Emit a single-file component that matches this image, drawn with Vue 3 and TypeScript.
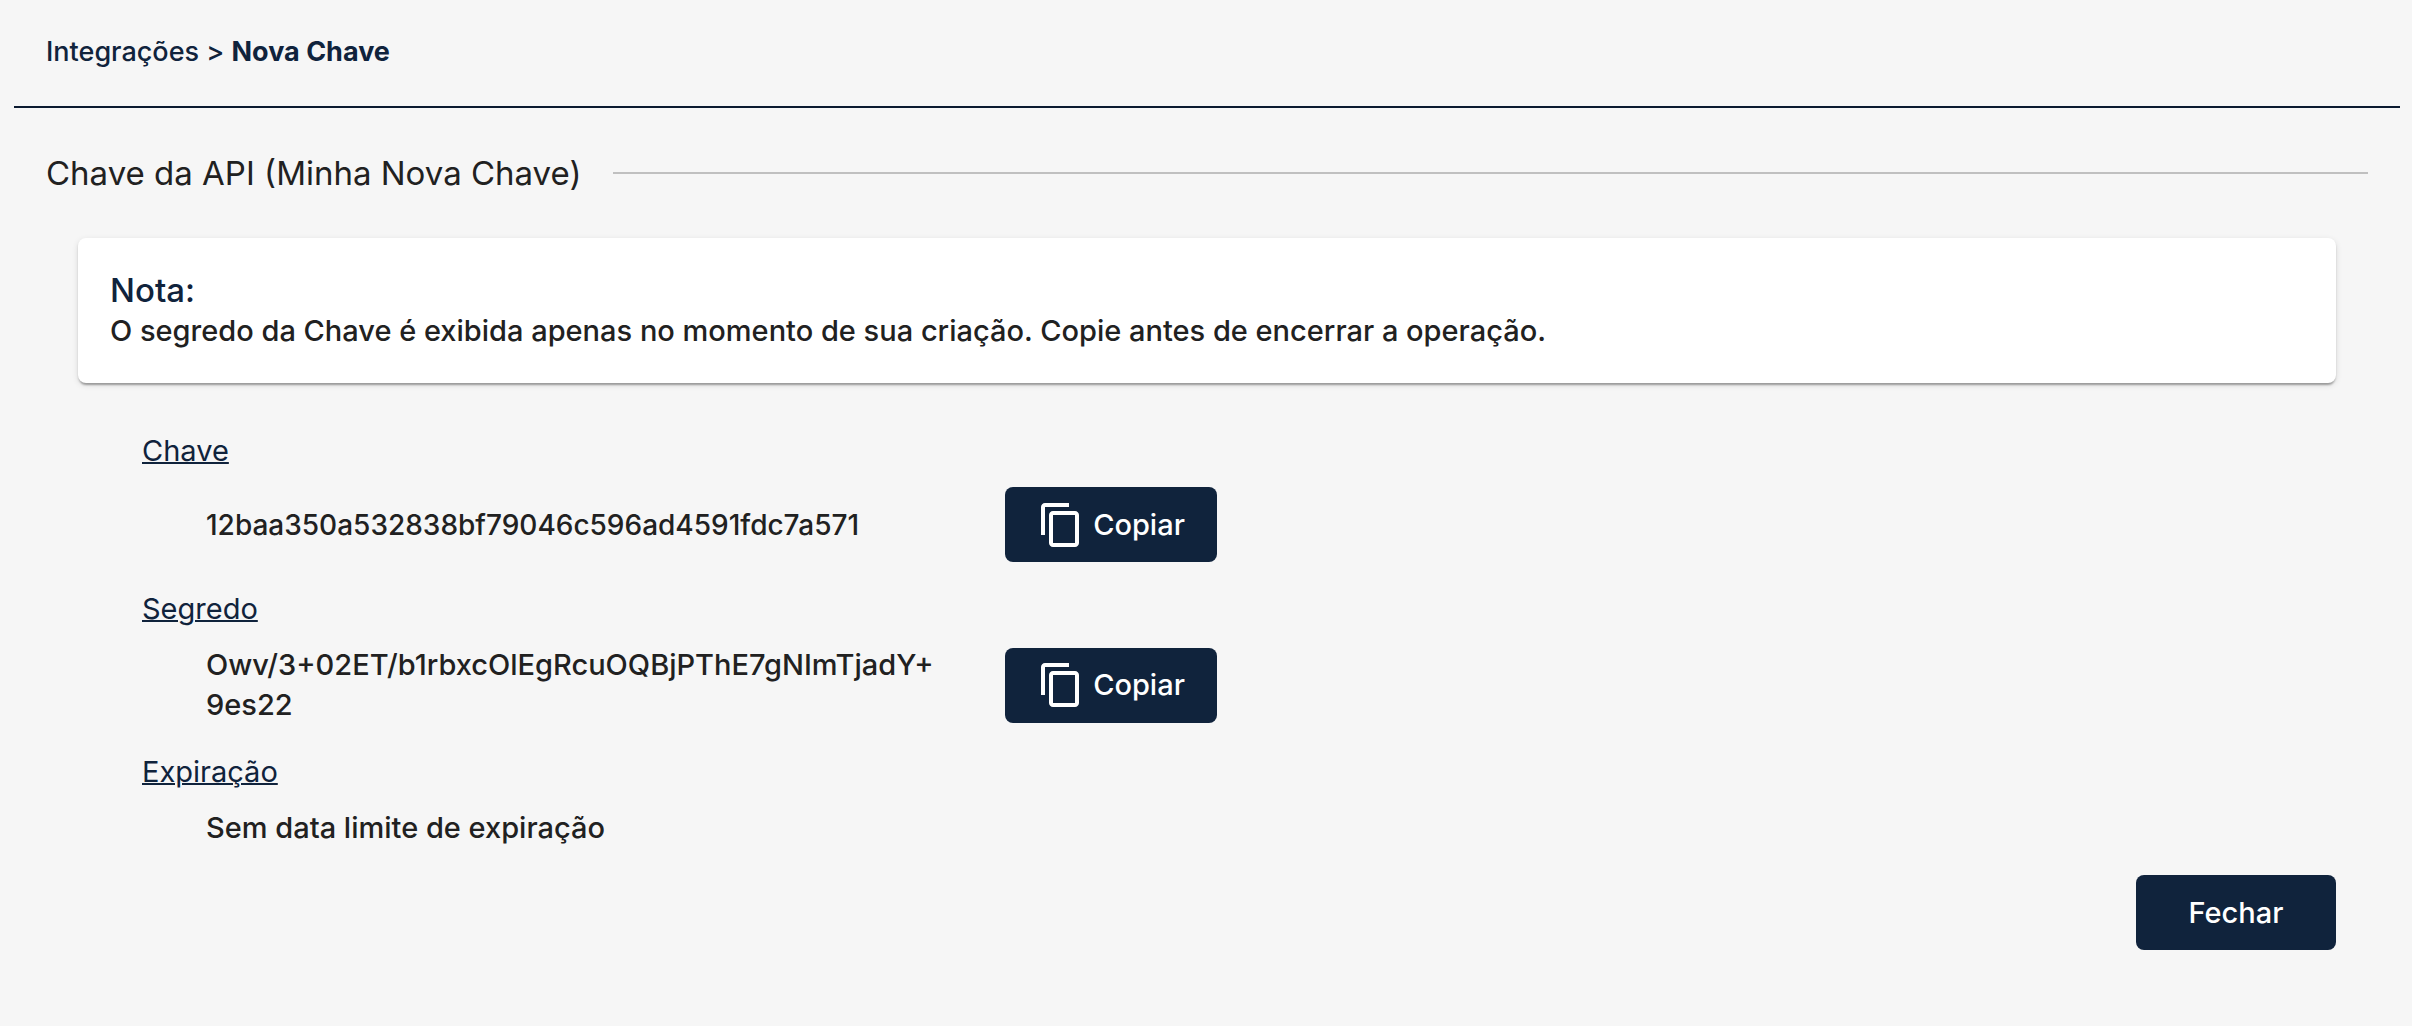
<script setup lang="ts">
interface Field {
  label: string
  value: string
  copyable: boolean
  compact?: boolean
}

const keyName = 'Minha Nova Chave'

const fields: Field[] = [
  { label: 'Chave', value: '12baa350a532838bf79046c596ad4591fdc7a571', copyable: true, compact: true },
  { label: 'Segredo', value: 'Owv/3+02ET/b1rbxcOlEgRcuOQBjPThE7gNImTjadY+9es22', copyable: true },
  { label: 'Expiração', value: 'Sem data limite de expiração', copyable: false },
]

function copy(value: string): void {
  navigator.clipboard?.writeText(value)
}

// Offers a line break after the last plus sign of a long secret.
function chunks(value: string): string[] {
  const at = value.lastIndexOf('+')
  return at < 0 ? [value] : [value.slice(0, at + 1), value.slice(at + 1)]
}
</script>

<template>
  <div class="page">
    <nav class="breadcrumb" aria-label="Navegação">
      <a href="#">Integrações</a> &gt; <strong>Nova Chave</strong>
    </nav>

    <main class="content">
      <h1 class="title"><span>Chave da API ({{ keyName }})</span></h1>

      <section class="note">
        <h2>Nota:</h2>
        <p>O segredo da Chave é exibida apenas no momento de sua criação. Copie antes de encerrar a operação.</p>
      </section>

      <dl class="fields">
        <template v-for="field in fields" :key="field.label">
          <dt>{{ field.label }}</dt>
          <dd>
            <span class="value" :class="{ compact: field.compact }"><template v-for="(part, i) in chunks(field.value)" :key="i"><wbr v-if="i > 0" />{{ part }}</template></span>
            <button v-if="field.copyable" type="button" class="button copy" @click="copy(field.value)">
              <svg viewBox="0 0 24 24" aria-hidden="true">
                <path d="M16 1H4c-1.1 0-2 .9-2 2v14h2V3h12V1zm3 4H8c-1.1 0-2 .9-2 2v14c0 1.1.9 2 2 2h11c1.1 0 2-.9 2-2V7c0-1.1-.9-2-2-2zm0 16H8V7h11v14z" />
              </svg>
              Copiar
            </button>
          </dd>
        </template>
      </dl>

      <footer class="actions">
        <button type="button" class="button close">Fechar</button>
      </footer>
    </main>
  </div>
</template>

<style>
body {
  margin: 0;
  background: #f6f6f6;
}
</style>

<style scoped>
.page {
  box-sizing: border-box;
  min-height: 100vh;
  padding: 0 12px 0 14px;
  color: #212121;
  background: #f6f6f6;
  font-family: Inter, "Noto Sans", sans-serif;
  font-size: 29px;
  font-weight: 500;
  line-height: 40px;
}

.breadcrumb {
  padding: 36px 32px 38px;
  border-bottom: 2px solid #0b1a30;
  color: #10233c;
  font-size: 27px;
  line-height: 32px;
}

.breadcrumb a {
  color: inherit;
  text-decoration: none;
}

.content {
  padding: 45px 32px 0;
}

.title {
  display: flex;
  align-items: center;
  gap: 32px;
  margin: 0 0 45px;
  font-size: 33px;
  font-weight: 400;
}

.title::after {
  content: "";
  flex: 1;
  height: 2px;
  background: #c0c0c0;
}

.note {
  margin: 0 32px 48px;
  padding: 31px 32px 32px;
  border-radius: 8px;
  background: #fff;
  box-shadow: 0 4px 2px -2px rgba(0, 0, 0, 0.2), 0 2px 2px rgba(0, 0, 0, 0.14), 0 2px 6px rgba(0, 0, 0, 0.12);
}

.note h2 {
  margin: 0;
  color: #10233c;
  font-size: 33px;
  font-weight: 500;
  line-height: 42px;
}

.note p {
  margin: 0;
}

.fields {
  margin: 0 96px 0 64px;
  padding-left: 32px;
}

.fields dt {
  margin-bottom: 16px;
  color: #10233c;
  font-weight: 400;
  text-decoration: underline;
  text-decoration-thickness: 2px;
}

.fields dd {
  display: flex;
  align-items: center;
  margin: 0 0 27px 64px;
}

.value {
  box-sizing: border-box;
  width: 799px;
  padding-right: 48px;
}

.compact {
  font-size: 28px;
}

.button {
  display: flex;
  align-items: center;
  justify-content: center;
  height: 75px;
  border: 0;
  border-radius: 8px;
  color: #fff;
  background: #10233c;
  font: inherit;
  cursor: pointer;
}

.copy {
  gap: 8px;
  width: 212px;
}

.copy svg {
  width: 48px;
  height: 48px;
  fill: currentColor;
}

.close {
  width: 200px;
}

.actions {
  display: flex;
  justify-content: flex-end;
  padding: 0 32px;
}
</style>
